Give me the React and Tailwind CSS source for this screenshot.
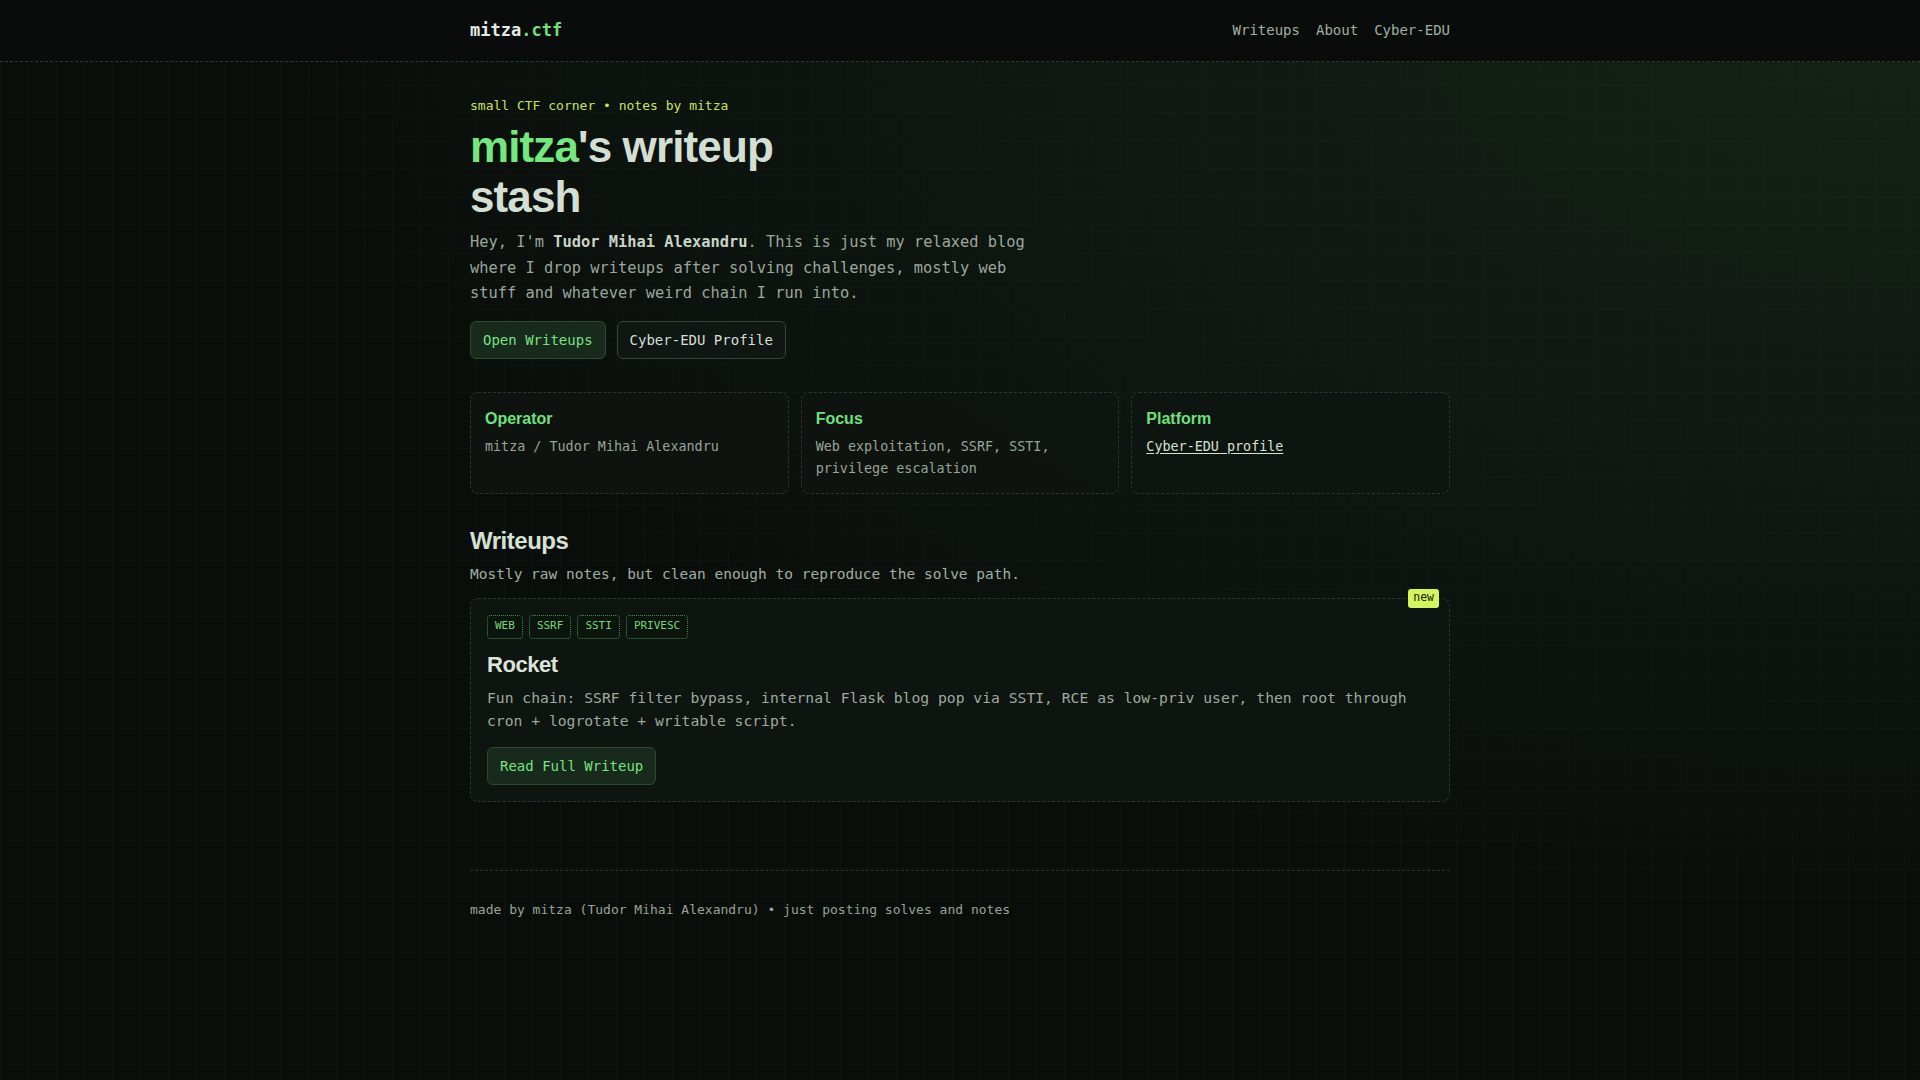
const mono = 'font-["DejaVu_Sans_Mono",monospace]'
const sans = 'font-["Liberation_Sans",Arial,sans-serif]'

const info = [
  { title: 'Operator', body: 'mitza / Tudor Mihai Alexandru' },
  { title: 'Focus', body: 'Web exploitation, SSRF, SSTI, privilege escalation' },
  { title: 'Platform', link: 'Cyber-EDU profile' },
]

const tags = ['WEB', 'SSRF', 'SSTI', 'PRIVESC']

export default function App() {
  return (
    <div className={`min-h-screen bg-[#0a0e0b] bg-[radial-gradient(ellipse_at_100%_0%,rgba(44,78,50,0.32),transparent_60%)] ${mono}`}>
      <div className="min-h-screen bg-[linear-gradient(rgba(120,170,120,0.03)_1px,transparent_1px),linear-gradient(90deg,rgba(120,170,120,0.03)_1px,transparent_1px)] bg-[size:28px_28px]">
        <header className="bg-[#090c0a] border-b border-dashed border-[#2e3b31]">
          <div className="max-w-[980px] mx-auto h-[61px] flex items-center justify-between">
            <div className="text-[17px] font-bold text-[#e4ebe4]">
              mitza<span className="text-[#6fe07b]">.ctf</span>
            </div>
            <nav className="flex gap-4 text-[14px] text-[#a1afa3]">
              <a>Writeups</a>
              <a>About</a>
              <a>Cyber-EDU</a>
            </nav>
          </div>
        </header>

        <main className="max-w-[980px] mx-auto pt-[34px]">
          <p className="text-[13px] leading-5 text-[#c8e25c]">small CTF corner • notes by mitza</p>
          <h1 className={`${sans} mt-[6px] max-w-[360px] text-[44px] leading-[50px] font-bold tracking-[-0.02em] text-[#d4dfd4]`}>
            <span className="text-[#74e77f]">mitza</span>'s writeup stash
          </h1>
          <p className="mt-2 max-w-[580px] text-[15.36px] leading-[25.5px] text-[#9ba79c]">
            Hey, I'm <b className="text-[#c9d4c9]">Tudor Mihai Alexandru</b>. This is just my relaxed blog where I drop writeups after solving challenges, mostly web stuff and whatever weird chain I run into.
          </p>
          <div className="mt-[14px] flex gap-[11px]">
            <a className="px-[12px] py-[8px] text-[14px] leading-5 rounded-md border border-[#2c4a31] bg-[#172a1b] text-[#78e27f]">Open Writeups</a>
            <a className="px-[12px] py-[8px] text-[14px] leading-5 rounded-md border border-[#36433a] bg-[#101612] text-[#d5dfd5]">Cyber-EDU Profile</a>
          </div>

          <div className="mt-[33px] grid grid-cols-3 gap-3">
            {info.map((c) => (
              <div key={c.title} className="h-[102px] rounded-lg border border-dashed border-[#2b372d] bg-[#0e1410]/90 px-[14px] pt-[15px]">
                <h3 className={`${sans} text-[16px] leading-[22px] font-bold text-[#6fe07b]`}>{c.title}</h3>
                {c.body && <p className="mt-[6px] text-[13.4px] leading-[22px] text-[#98a499]">{c.body}</p>}
                {c.link && <a className="mt-[6px] block text-[13.4px] leading-[22px] text-[#d6e0d6] underline underline-offset-2">{c.link}</a>}
              </div>
            ))}
          </div>

          <h2 className={`${sans} mt-[33px] text-[24px] leading-7 font-bold tracking-[-0.02em] text-[#d6e1d6]`}>Writeups</h2>
          <p className="mt-[8px] text-[14.5px] leading-[22px] text-[#a3aea4]">Mostly raw notes, but clean enough to reproduce the solve path.</p>

          <div className="relative mt-[13px] rounded-lg border border-dashed border-[#2b372d] bg-[#0e150f]/90 px-4 pt-[16px] pb-4">
            <span className="absolute -top-[10px] right-[10px] px-[5px] h-[19px] flex items-center rounded-[3px] bg-[#d3f45c] text-[11.5px] text-[#1b220f]">new</span>
            <div className="flex gap-[6px]">
              {tags.map((t) => (
                <span key={t} className="h-[24px] px-[7px] flex items-center rounded border border-dotted border-[#3f8f4b] bg-[#0c140e] text-[11px] text-[#74d97d]">{t}</span>
              ))}
            </div>
            <h3 className={`${sans} mt-[12px] text-[22px] leading-7 font-bold tracking-[-0.02em] text-[#dae4da]`}>Rocket</h3>
            <p className="mt-[7px] text-[14.7px] leading-[23px] text-[#9ea99f]">
              Fun chain: SSRF filter bypass, internal Flask blog pop via SSTI, RCE as low-priv user, then root through cron + logrotate + writable script.
            </p>
            <a className="mt-[15px] inline-block px-[12px] py-[8px] text-[14px] leading-5 rounded-md border border-[#2c4a31] bg-[#172a1b] text-[#78e27f]">Read Full Writeup</a>
          </div>
        </main>

        <footer className="max-w-[980px] mx-auto mt-[68px] border-t border-dashed border-[#2a342c] pt-[29px] pb-[160px]">
          <p className="text-[13px] leading-5 text-[#98a399]">made by mitza (Tudor Mihai Alexandru) • just posting solves and notes</p>
        </footer>
      </div>
    </div>
  )
}
